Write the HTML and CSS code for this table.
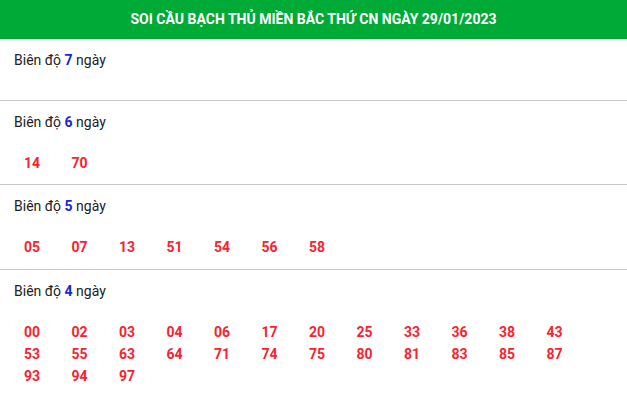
FILE: index.html
```html
<!DOCTYPE html>
<html lang="vi">
<head>
<meta charset="utf-8">
<title>Soi cầu bạch thủ miền Bắc</title>
<link rel="stylesheet" href="styles.css">
</head>
<body>
<div class="page">
  <div class="header">SOI CẦU BẠCH THỦ MIỀN BẮC THỨ CN NGÀY 29/01/2023</div>
  <div class="section">
    <div class="title">Biên độ <b>7</b> ngày</div>
    <div class="nums"></div>
  </div>
  <div class="section">
    <div class="title">Biên độ <b>6</b> ngày</div>
    <div class="nums"><span>14</span><span>70</span></div>
  </div>
  <div class="section">
    <div class="title">Biên độ <b>5</b> ngày</div>
    <div class="nums"><span>05</span><span>07</span><span>13</span><span>51</span><span>54</span><span>56</span><span>58</span></div>
  </div>
  <div class="section">
    <div class="title">Biên độ <b>4</b> ngày</div>
    <div class="nums"><span>00</span><span>02</span><span>03</span><span>04</span><span>06</span><span>17</span><span>20</span><span>25</span><span>33</span><span>36</span><span>38</span><span>43</span><span>53</span><span>55</span><span>63</span><span>64</span><span>71</span><span>74</span><span>75</span><span>80</span><span>81</span><span>83</span><span>85</span><span>87</span><span>93</span><span>94</span><span>97</span></div>
  </div>
</div>
</body>
</html>
```

FILE: styles.css
```css
html, body {
  margin: 0;
  padding: 0;
  background: #ffffff;
}
body {
  font-family: Roboto, "Liberation Sans", sans-serif;
  font-size: 14px;
  color: #222222;
}
.header {
  height: 39px;
  line-height: 39px;
  background: #00aa36;
  color: #ffffff;
  font-weight: bold;
  text-align: center;
  font-size: 14px;
}
.section {
  padding: 11px 14px 10px;
  border-bottom: 1px solid #c8c8c8;
}
.title {
  line-height: 20px;
}
.title b {
  color: #1a25d6;
  font-weight: bold;
}
.nums {
  margin-top: 20px;
  padding-left: 10px;
  display: grid;
  grid-template-columns: repeat(12, 47.5px);
  grid-auto-rows: 22.3px;
  line-height: 22.3px;
  font-weight: bold;
  color: #f7232f;
}
```
